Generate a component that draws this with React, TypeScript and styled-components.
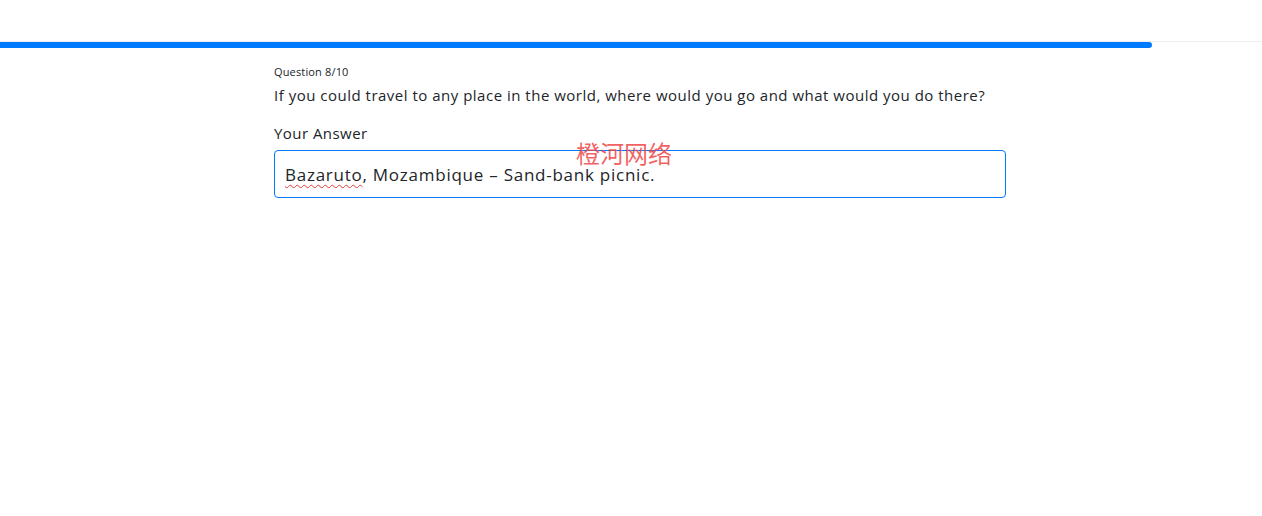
import React from "react";
import styled, { createGlobalStyle } from "styled-components";

const Global = createGlobalStyle`
  html, body { margin: 0; padding: 0; background: #fff; }
  body { font-family: "Open Sans", "Noto Sans", sans-serif; color: #212529; }
`;

const Page = styled.div`
  position: relative;
  width: 1262px;
  height: 516px;
  padding-top: 41px;
  box-sizing: border-box;
`;

const Track = styled.div`
  border-top: 1px solid #eeeeee;
  height: 6px;
`;

const Fill = styled.div`
  height: 6px;
  background: #007bff;
  border-radius: 0 3px 3px 0;
`;

const Content = styled.main`
  width: 732px;
  margin-left: 274px;
  padding-top: 16px;
  display: flex;
  flex-direction: column;
`;

const Counter = styled.div`
  font-size: 11px;
  line-height: 16px;
  letter-spacing: 0.15px;
  color: #212529;
`;

const QuestionText = styled.h2`
  margin: 4px 0 0;
  font-size: 15px;
  line-height: 22px;
  letter-spacing: 0.5px;
  font-weight: 400;
  color: #212529;
`;

const Label = styled.label`
  margin-top: 16px;
  font-size: 15px;
  line-height: 22px;
  letter-spacing: 0.45px;
  color: #212529;
`;

const Field = styled.div`
  margin-top: 6px;
  height: 48px;
  box-sizing: border-box;
  border: 1px solid #007bff;
  border-radius: 4px;
  display: flex;
  align-items: center;
  padding: 0 10px;
  font-size: 17px;
  letter-spacing: 0.75px;
  color: #212529;
`;

const Misspelled = styled.span`
  text-decoration: underline wavy #e53935;
  text-decoration-thickness: 1px;
  text-underline-offset: 3px;
`;

const Watermark = styled.div`
  position: absolute;
  left: 576px;
  top: 137px;
  font-family: "Noto Sans CJK SC", sans-serif;
  font-size: 24px;
  line-height: 32px;
  color: rgba(240, 70, 70, 0.85);
  pointer-events: none;
`;

export default function App() {
  const current = 8;
  const total = 10;
  const progress = 91.28;
  return (
    <>
      <Global />
      <Page>
        <Track>
          <Fill style={{ width: `${progress}%` }} />
        </Track>
        <Content>
          <Counter>
            Question {current}/{total}
          </Counter>
          <QuestionText>
            If you could travel to any place in the world, where would you go and what would you do there?
          </QuestionText>
          <Label>Your Answer</Label>
          <Field role="textbox">
            <Misspelled>Bazaruto</Misspelled>, Mozambique – Sand-bank picnic.
          </Field>
        </Content>
        <Watermark>橙河网络</Watermark>
      </Page>
    </>
  );
}
